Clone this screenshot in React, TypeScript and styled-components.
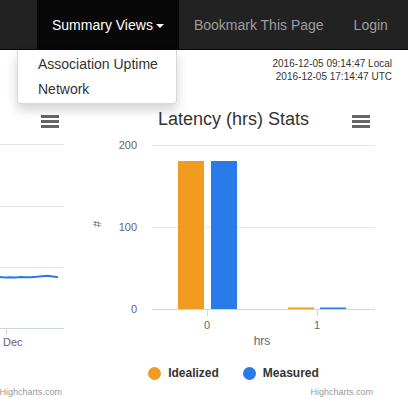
import styled, { createGlobalStyle } from "styled-components";

const GlobalStyle = createGlobalStyle`
  html, body {
    margin: 0;
    padding: 0;
    background: #fff;
    font-family: "Liberation Sans", Arial, Helvetica, sans-serif;
    overflow: hidden;
  }
`;

const ORANGE = "#f39b1f";
const BLUE = "#2a7ae9";

const Navbar = styled.nav`
  height: 50px;
  background: #222;
  border-bottom: 1px solid #080808;
  box-sizing: border-box;
  display: flex;
  padding-left: 37px;
`;

const NavItem = styled.div<{ $active?: boolean }>`
  position: relative;
  padding: 0 15px;
  line-height: 50px;
  font-size: 14px;
  color: ${(p) => (p.$active ? "#fff" : "#9d9d9d")};
  background: ${(p) => (p.$active ? "#080808" : "transparent")};
  white-space: nowrap;
`;

const Caret = styled.span`
  display: inline-block;
  width: 0;
  height: 0;
  margin-left: 3px;
  vertical-align: middle;
  border-top: 4px solid #fff;
  border-left: 4px solid transparent;
  border-right: 4px solid transparent;
`;

const Dropdown = styled.ul`
  position: absolute;
  top: 50px;
  left: -20px;
  width: 160px;
  margin: 0;
  padding: 2px 0 1px;
  list-style: none;
  background: #fff;
  border: 1px solid rgba(0, 0, 0, 0.15);
  border-top: none;
  border-radius: 0 0 4px 4px;
  box-shadow: 0 6px 12px rgba(0, 0, 0, 0.175);
  box-sizing: border-box;
  z-index: 10;
`;

const DropdownItem = styled.li`
  padding: 3px 20px;
  line-height: 19px;
  font-size: 14px;
  color: #333;
`;

const Clock = styled.div`
  padding: 7px 16px 0 0;
  text-align: right;
  font-size: 10px;
  line-height: 13px;
  color: #333;
`;

const ChartsRow = styled.div`
  display: flex;
  justify-content: flex-end;
  gap: 8px;
  padding-right: 23px;
  margin-top: 17px;
  overflow: hidden;
`;

const Card = styled.div`
  position: relative;
  flex: 0 0 303px;
  height: 300px;
  display: flex;
  flex-direction: column;
`;

const Header = styled.div`
  height: 36px;
  display: flex;
  align-items: flex-start;
  justify-content: center;
`;

const Title = styled.div`
  margin-top: 8px;
  font-size: 18px;
  line-height: 22px;
  color: #333;
`;

const MenuButton = styled.div`
  position: absolute;
  top: 15px;
  right: 15px;
  width: 18px;
  display: flex;
  flex-direction: column;
  gap: 2px;
`;

const MenuBar = styled.span`
  height: 3px;
  background: #666;
`;

const Plot = styled.svg`
  display: block;
  flex-shrink: 0;
  font-family: "Liberation Sans", Arial, sans-serif;
`;

const Legend = styled.div`
  height: 26px;
  padding-top: 10px;
  display: flex;
  justify-content: center;
  align-items: center;
  gap: 24px;
`;

const LegendItem = styled.div`
  display: flex;
  align-items: center;
  gap: 7px;
  font-size: 12px;
  font-weight: bold;
  color: #333;
`;

const Dot = styled.span<{ $color: string }>`
  width: 13px;
  height: 13px;
  border-radius: 50%;
  background: ${(p) => p.$color};
`;

const Credits = styled.div`
  line-height: 12px;
  padding-right: 12px;
  text-align: right;
  font-size: 9px;
  color: #999;
`;

function Menu() {
  return (
    <MenuButton>
      <MenuBar />
      <MenuBar />
      <MenuBar />
    </MenuButton>
  );
}

const uptime = [
  141, 141.5, 141, 141.3, 141.6, 141, 141.4, 141.2, 141.6, 141.1, 141.4, 141.2,
  141.5, 141.1, 141.3, 141.6, 141.2, 141.4, 141, 141.3, 141.5, 141.1, 141.3,
  141.2, 141.5, 141, 141.4, 141.2, 141.6, 141.3, 141, 141.4, 141.2, 141.5,
  141.1, 141.3, 141.2, 140.8, 140.2, 139.8, 140.4, 141.3,
];

function UptimeChart() {
  const step = (287 - 70) / (uptime.length - 1);
  const d = uptime
    .map((y, i) => `${i === 0 ? "M" : "L"}${(70 + i * step).toFixed(1)} ${y}`)
    .join(" ");
  return (
    <Card>
      <Header />
      <Menu />
      <Plot width={303} height={214}>
        {[8, 70, 131].map((y) => (
          <line key={y} x1={70} x2={293} y1={y + 0.5} y2={y + 0.5} stroke="#e6e6e6" />
        ))}
        <line x1={70} x2={293} y1={192.5} y2={192.5} stroke="#ccd6eb" />
        <line x1={235.5} x2={235.5} y1={192} y2={199} stroke="#ccd6eb" />
        <path d={d} fill="none" stroke={BLUE} strokeWidth={2} strokeLinejoin="round" />
        <text x={232} y={210} fontSize={11} fill="#666">
          Dec
        </text>
      </Plot>
      <Legend />
      <Credits>Highcharts.com</Credits>
    </Card>
  );
}

function LatencyChart() {
  const grid = [
    { y: 9, label: "200" },
    { y: 91, label: "100" },
  ];
  const bars = [
    { x: 96, top: 25, color: ORANGE },
    { x: 129, top: 25, color: BLUE },
    { x: 206, top: 171.5, color: ORANGE },
    { x: 238, top: 171.5, color: BLUE },
  ];
  return (
    <Card>
      <Header>
        <Title>Latency (hrs) Stats</Title>
      </Header>
      <Menu />
      <Plot width={303} height={214}>
        {grid.map((g) => (
          <g key={g.label}>
            <line x1={70} x2={293} y1={g.y + 0.5} y2={g.y + 0.5} stroke="#e6e6e6" />
            <text x={55} y={g.y + 4} fontSize={11} fill="#666" textAnchor="end">
              {g.label}
            </text>
          </g>
        ))}
        <text x={55} y={177} fontSize={11} fill="#666" textAnchor="end">
          0
        </text>
        <text
          x={22}
          y={91}
          fontSize={11}
          fill="#666"
          textAnchor="middle"
          transform="rotate(-90 19 91)"
        >
          #
        </text>
        {bars.map((b) => (
          <rect key={b.x} x={b.x} y={b.top} width={26} height={173 - b.top} fill={b.color} />
        ))}
        <line x1={70} x2={293} y1={173.5} y2={173.5} stroke="#ccd6eb" />
        <line x1={125.5} x2={125.5} y1={173} y2={180} stroke="#ccd6eb" />
        <line x1={235.5} x2={235.5} y1={173} y2={180} stroke="#ccd6eb" />
        <text x={125} y={193} fontSize={11} fill="#666" textAnchor="middle">
          0
        </text>
        <text x={235} y={193} fontSize={11} fill="#666" textAnchor="middle">
          1
        </text>
        <text x={180} y={209} fontSize={12} fill="#666" textAnchor="middle">
          hrs
        </text>
      </Plot>
      <Legend>
        <LegendItem>
          <Dot $color={ORANGE} />
          Idealized
        </LegendItem>
        <LegendItem>
          <Dot $color={BLUE} />
          Measured
        </LegendItem>
      </Legend>
      <Credits>Highcharts.com</Credits>
    </Card>
  );
}

export default function App() {
  return (
    <>
      <GlobalStyle />
      <Navbar>
        <NavItem $active>
          Summary Views
          <Caret />
          <Dropdown>
            <DropdownItem>Association Uptime</DropdownItem>
            <DropdownItem>Network</DropdownItem>
          </Dropdown>
        </NavItem>
        <NavItem>Bookmark This Page</NavItem>
        <NavItem>Login</NavItem>
      </Navbar>
      <Clock>
        2016-12-05 09:14:47 Local
        <br />
        2016-12-05 17:14:47 UTC
      </Clock>
      <ChartsRow>
        <UptimeChart />
        <LatencyChart />
      </ChartsRow>
    </>
  );
}
